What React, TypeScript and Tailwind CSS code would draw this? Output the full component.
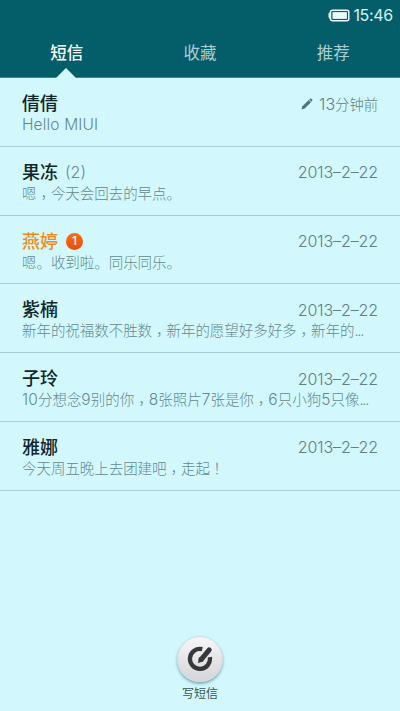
import { Fragment } from 'react';
import clsx from 'clsx';

interface Thread {
  name: string;
  preview: string;
  date: string;
  count?: number;
  unread?: number;
  draft?: boolean;
}

const tabs = ['短信', '收藏', '推荐'];

const threads: Thread[] = [
  { name: '倩倩', preview: 'Hello MIUI', date: '13分钟前', draft: true },
  { name: '果冻', preview: '嗯，今天会回去的早点。', date: '2013-2-22', count: 2 },
  { name: '燕婷', preview: '嗯。收到啦。同乐同乐。', date: '2013-2-22', unread: 1 },
  { name: '紫楠', preview: '新年的祝福数不胜数，新年的愿望好多好多，新年的...', date: '2013-2-22' },
  { name: '子玲', preview: '10分想念9别的你，8张照片7张是你，6只小狗5只像...', date: '2013-2-22' },
  { name: '雅娜', preview: '今天周五晚上去团建吧，走起！', date: '2013-2-22' },
];

const Battery = () => (
  <svg width="22" height="13" viewBox="0 0 22 13" fill="none">
    <rect x="2.5" y="1.2" width="18.3" height="10.6" rx="2" stroke="#e9fbfd" strokeWidth="1.5" />
    <path d="M3 2.800C1.500 3.200.5 4.200.5 5v3c0 .8 1 1.800 2.500 2.200z" fill="#e9fbfd" />
    <rect x="4.500" y="3.100" width="14.400" height="6.800" fill="#e9fbfd" />
  </svg>
);

const Pencil = () => (
  <svg width="12" height="12" viewBox="0 0 12 12" fill="#527479">
    <path d="M.5 11.500l.9-3.300L7.700 2l2.300 2.300-6.300 6.200z" />
    <path d="M8.200 1.500l.9-.8c.4-.4.9-.4 1.300 0l.8.8c.4.4.4.9 0 1.300l-.8.9z" />
  </svg>
);

const Compose = () => (
  <svg width="26" height="26" viewBox="0 0 26 26" fill="none">
    <path d="M15.300 3.200A10 10 0 1 0 22.800 11.100" stroke="#37383b" strokeWidth="4.300" />
    <path d="M14.300 13.300L22.200 3.900" stroke="#37383b" strokeWidth="5" strokeLinecap="round" />
    <path d="M11.300 16.700l.9-5.200 4 3.400z" fill="#37383b" stroke="#37383b" strokeWidth=".6" strokeLinejoin="round" />
  </svg>
);

// Full-width punctuation is centred in its cell; digits and letters are set a little larger
const Preview = ({ text }: { text: string }) => (
  <p className="h-[20px] text-[14.5px] leading-[20px] font-light tracking-[-0.05px] whitespace-nowrap text-[#64898e]">
    {text.split(/([，！]|\.\.\.|[A-Za-z0-9 ]+)/).map((part, i) => {
      if (part === '，') {
        return <span key={i} className="relative top-[4px] font-['Noto_Sans_CJK_TC'] leading-none">{part}</span>;
      }
      if (part === '！') {
        return <span key={i} className="font-['Noto_Sans_CJK_TC'] leading-none">{part}</span>;
      }
      if (part === '...') {
        return <span key={i} className="tracking-[-1.2px]">{part}</span>;
      }
      if (/^[A-Za-z0-9 ]+$/.test(part)) {
        return <span key={i} className="text-[15.5px] leading-none tracking-[0.15px]">{part}</span>;
      }
      return <Fragment key={i}>{part}</Fragment>;
    })}
  </p>
);

const ThreadRow = ({ thread }: { thread: Thread }) => (
  <li className="h-[68.8px] border-b border-[#a9cdd3] pt-[14px] pr-[22px] pl-[22px]">
    <div className="flex h-[23px] items-center justify-between">
      <div className="flex items-center">
        <span className={clsx('text-[18px] leading-[23px] font-medium', thread.unread ? 'text-[#f28a1c]' : 'text-[#10262a]')}>
          {thread.name}
        </span>
        {thread.count && <span className="ml-[7px] text-[16px] font-light text-[#64898e]">({thread.count})</span>}
        {thread.unread && (
          <span className="ml-[8px] flex size-[17px] items-center justify-center rounded-full bg-linear-to-b from-[#f4701a] to-[#e84c05] text-[12px] leading-none font-medium text-white">
            {thread.unread}
          </span>
        )}
      </div>
      <div className="flex items-center gap-[6px]">
        {thread.draft && <Pencil />}
        {thread.draft ? (
          <span className="text-[14.3px] font-light text-[#5d8186]">
            <span className="text-[16px]">{thread.date.slice(0, 2)}</span>
            {thread.date.slice(2)}
          </span>
        ) : (
          <span className="text-[16px] font-light tracking-[-0.1px] text-[#5d8186]">
            {thread.date.split('-').map((part, i) => (
              <Fragment key={i}>
                {i > 0 && <span className="relative -top-[1px]">–</span>}
                {part}
              </Fragment>
            ))}
          </span>
        )}
      </div>
    </div>
    <Preview text={thread.preview} />
  </li>
);

export default function App() {
  return (
    <div className="flex h-[711px] w-[400px] flex-col overflow-hidden bg-[#d2f8fe] font-['Inter','Noto_Sans_CJK_SC',sans-serif]">
      <header className="flex h-[78px] flex-col border-b border-[#3e8790] bg-[#045e69]">
        <div className="flex h-[30px] items-center justify-end gap-[3px] pr-[7px] text-[16px] text-[#d9f1f3]">
          <Battery />
          <span className="tracking-[-0.3px]">15:46</span>
        </div>
        <nav className="grid h-[47px] grid-cols-3">
          {tabs.map((tab, i) => (
            <div
              key={tab}
              className={clsx(
                'relative flex h-[46px] items-center justify-center text-[16.5px]',
                i === 0 ? 'font-medium text-white' : 'text-[#a9cfd4]'
              )}
            >
              {tab}
              {i === 0 && (
                <svg className="absolute -bottom-[2px] left-[56px]" width="20" height="11" viewBox="0 0 20 11">
                  <path d="M0 11L10 1l10 10z" fill="#d2f8fe" />
                </svg>
              )}
            </div>
          ))}
        </nav>
      </header>

      <ul className="flex-1">
        {threads.map((thread) => (
          <ThreadRow key={thread.name} thread={thread} />
        ))}
      </ul>

      <footer className="flex h-[75px] flex-col items-center">
        <button className="flex size-[46px] items-center justify-center rounded-full border border-[#d5d9db] bg-linear-to-b from-[#f7f5f7] to-[#d5d6d9] shadow-[0_2px_3px_rgba(40,100,110,0.5)]">
          <Compose />
        </button>
        <span className="mt-[3px] text-[12px] leading-[18px] text-[#35565b]">写短信</span>
      </footer>
    </div>
  );
}
